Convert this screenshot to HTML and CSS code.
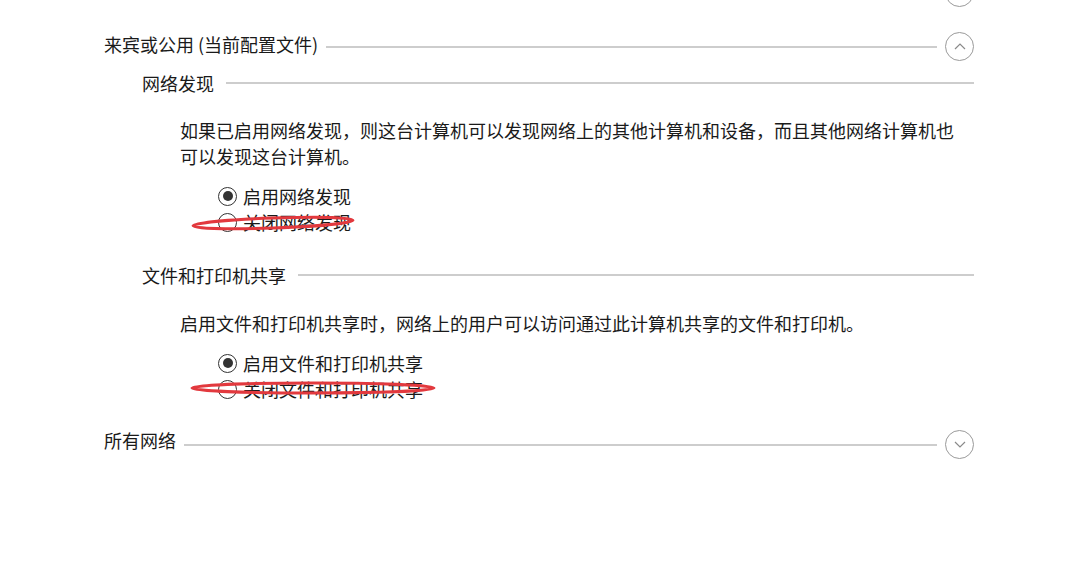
FILE: index.html
```html
<!DOCTYPE html>
<html lang="zh-CN">
<head>
  <meta charset="UTF-8">
  <title>高级共享设置</title>
  <link rel="stylesheet" href="styles.css">
</head>
<body>
  <div class="settings">

    <!-- tail of the previous profile, scrolled off -->
    <div class="group-head prev">
      <button class="toggle"><svg viewBox="0 0 12 7"><path d="M1 1 L6 6 L11 1"/></svg></button>
    </div>

    <div class="group-head">
      <span class="group-title">来宾或公用 (当前配置文件)</span>
      <span class="rule"></span>
      <button class="toggle"><svg viewBox="0 0 12 7"><path d="M1 6 L6 1 L11 6"/></svg></button>
    </div>

    <div class="section">
      <div class="section-head">
        <span class="section-title">网络发现</span>
        <span class="rule"></span>
      </div>
      <p class="desc">如果已启用网络发现，则这台计算机可以发现网络上的其他计算机和设备，而且其他网络计算机也可以发现这台计算机。</p>
      <div class="options">
        <label class="radio"><span class="dot checked"></span>启用网络发现</label>
        <label class="radio"><span class="dot"></span>关闭网络发现</label>
        <svg class="mark mark-1" viewBox="0 0 170 20"><ellipse cx="83" cy="10" rx="80" ry="5" transform="rotate(-2 83 10)"/></svg>
      </div>
    </div>

    <div class="section">
      <div class="section-head">
        <span class="section-title">文件和打印机共享</span>
        <span class="rule"></span>
      </div>
      <p class="desc">启用文件和打印机共享时，网络上的用户可以访问通过此计算机共享的文件和打印机。</p>
      <div class="options">
        <label class="radio"><span class="dot checked"></span>启用文件和打印机共享</label>
        <label class="radio"><span class="dot"></span>关闭文件和打印机共享</label>
        <svg class="mark mark-2" viewBox="0 0 250 20"><ellipse cx="123" cy="10" rx="121" ry="5"/></svg>
      </div>
    </div>

    <div class="group-head last">
      <span class="group-title">所有网络</span>
      <span class="rule"></span>
      <button class="toggle"><svg viewBox="0 0 12 7"><path d="M1 1 L6 6 L11 1"/></svg></button>
    </div>

  </div>
</body>
</html>
```

FILE: styles.css
```css
* { margin: 0; padding: 0; box-sizing: border-box; }
body {
  font-family: "Noto Sans CJK SC", "Liberation Sans", sans-serif;
  font-size: 18px;
  color: #1a1a1a;
  background: #fff;
  overflow: hidden;
}
.settings {
  width: 974px;
  padding-left: 104px;
}

/* group headers with round toggle */
.group-head {
  display: flex;
  align-items: center;
  height: 29px;
  margin-top: 25px;
}
.group-head.prev {
  justify-content: flex-end;
  margin-top: -22px;
}
.group-head.last { margin-top: 28px; }
.group-title {
  line-height: 26px;
  margin-bottom: 5px;
  white-space: nowrap;
}
.group-head.last .group-title { margin-bottom: 9px; }
.rule {
  flex: 1;
  height: 2px;
  background: #cdcdcd;
  margin-left: 8px;
}
.toggle {
  width: 29px;
  height: 29px;
  margin-left: 8px;
  border: 1px solid #9a9a9a;
  border-radius: 50%;
  background: #fff;
  display: flex;
  align-items: center;
  justify-content: center;
}
.toggle svg {
  width: 12px;
  height: 7px;
  fill: none;
  stroke: #8a8a8a;
  stroke-width: 1.2;
}

/* sections */
.section { padding-left: 38px; }
.section-head {
  display: flex;
  align-items: center;
  margin-top: 9px;
  line-height: 26px;
}
.section + .section .section-head { margin-top: 27px; }
.section-head .rule { margin-left: 12px; }
.desc {
  margin: 21px 0 0 38px;
  width: 785px;
  line-height: 26px;
}
.section + .section .desc { margin-top: 22px; }

.options {
  position: relative;
  margin: 14px 0 0 74px;
  display: flex;
  flex-direction: column;
}
.radio {
  display: flex;
  align-items: center;
  height: 26px;
  line-height: 26px;
}
.dot {
  width: 19px;
  height: 19px;
  border: 1.5px solid #333;
  border-radius: 50%;
  margin: 0 6px 0 2px;
  display: flex;
  align-items: center;
  justify-content: center;
}
.dot.checked::after {
  content: '';
  width: 10px;
  height: 10px;
  border-radius: 50%;
  background: #333;
}

/* red pen annotations on top */
.mark {
  position: absolute;
  fill: none;
  stroke: #e2393e;
  stroke-width: 3;
}
.mark-1 {
  left: -26px;
  top: 30px;
  width: 170px;
  height: 20px;
}
.mark-2 {
  left: -26px;
  top: 28px;
  width: 250px;
  height: 20px;
}
```
